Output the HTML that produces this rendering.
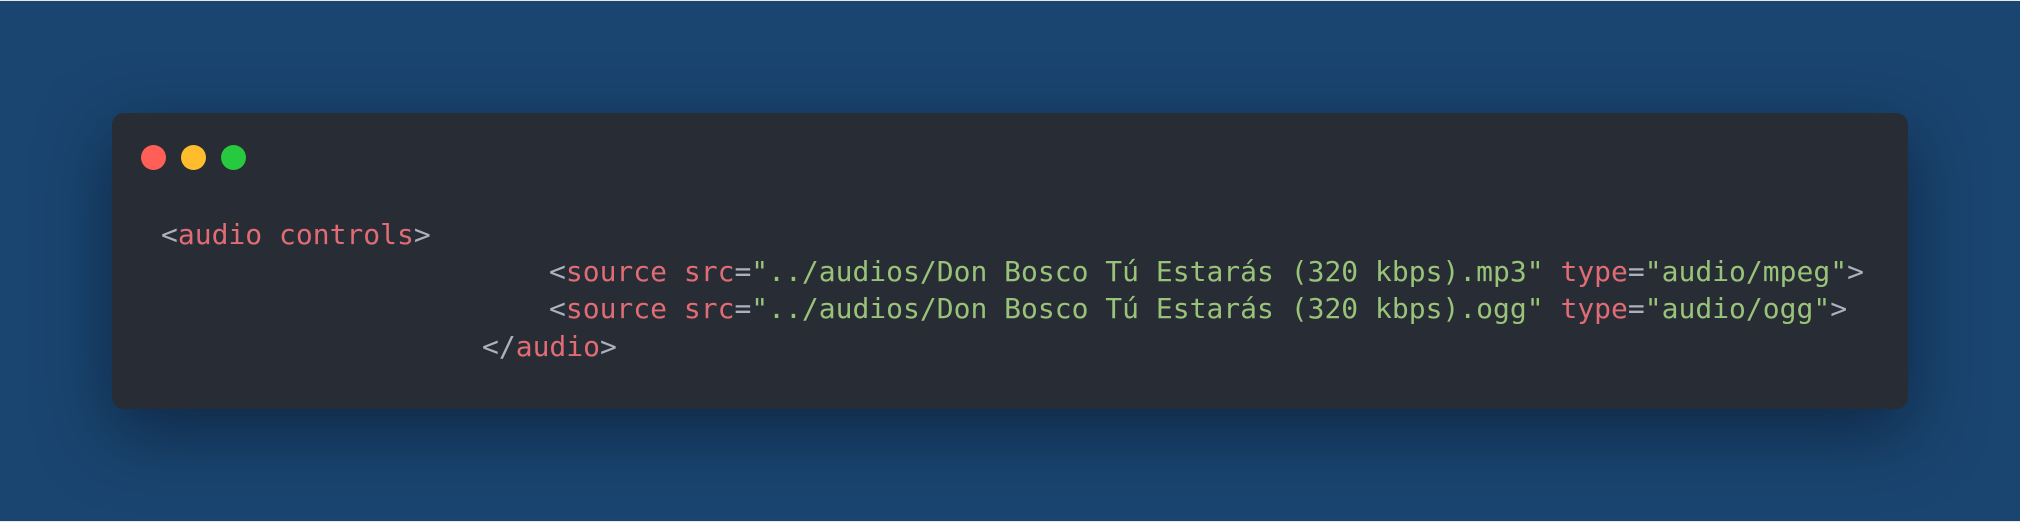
<!DOCTYPE html>
<html><head><meta charset="utf-8"><style>
html,body{margin:0;padding:0}
body{width:2020px;height:522px;position:relative;overflow:hidden;background:#1a4570;}
.topline{position:absolute;left:0;top:0;width:2020px;height:1px;background:#e8e8e8}
.botline{position:absolute;left:0;bottom:0;width:2020px;height:1px;background:#e8e8e8}
.card{position:absolute;left:112px;top:113px;width:1796px;height:296px;background:#282c34;border-radius:12px;box-shadow:0 22px 70px rgba(8,20,40,0.6);}
.dot{position:absolute;top:145px;width:25px;height:25px;border-radius:50%}
.code{position:absolute;font-family:"DejaVu Sans Mono","Liberation Mono",monospace;font-size:28px;line-height:38px;white-space:pre;color:#abb2bf}
.t{color:#e06c75}.s{color:#98c379}
</style></head><body>
<div class="topline"></div><div class="botline"></div>
<div class="card"></div>
<div class="dot" style="left:141px;background:#ff5f56"></div>
<div class="dot" style="left:181px;background:#ffbd2e"></div>
<div class="dot" style="left:221px;background:#27c93f"></div>
<div class="code" style="left:161px;top:216px">&lt;<span class="t">audio controls</span>&gt;</div>
<div class="code" style="left:549px;top:253px">&lt;<span class="t">source src</span>=<span class="s">"../audios/Don Bosco Tú Estarás (320 kbps).mp3"</span> <span class="t">type</span>=<span class="s">"audio/mpeg"</span>&gt;</div>
<div class="code" style="left:549px;top:290px">&lt;<span class="t">source src</span>=<span class="s">"../audios/Don Bosco Tú Estarás (320 kbps).ogg"</span> <span class="t">type</span>=<span class="s">"audio/ogg"</span>&gt;</div>
<div class="code" style="left:482px;top:328px">&lt;/<span class="t">audio</span>&gt;</div>
</body></html>
